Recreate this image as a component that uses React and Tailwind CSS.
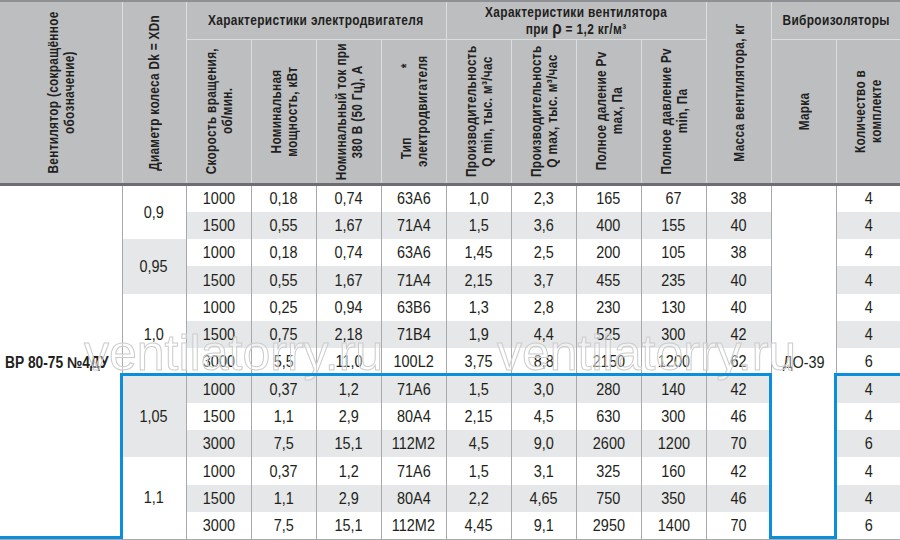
import React from "react";

const rows = [
  ["1000", "0,18", "0,74", "63А6", "1,0", "2,3", "165", "67", "38", "4"],
  ["1500", "0,55", "1,67", "71А4", "1,5", "3,6", "400", "155", "40", "4"],
  ["1000", "0,18", "0,74", "63А6", "1,45", "2,5", "200", "105", "38", "4"],
  ["1500", "0,55", "1,67", "71А4", "2,15", "3,7", "455", "235", "40", "4"],
  ["1000", "0,25", "0,94", "63В6", "1,3", "2,8", "230", "130", "40", "4"],
  ["1500", "0,75", "2,18", "71В4", "1,9", "4,4", "525", "300", "42", "4"],
  ["3000", "5,5", "11,0", "100L2", "3,75", "8,8", "2150", "1200", "62", "6"],
  ["1000", "0,37", "1,2", "71А6", "1,5", "3,0", "280", "140", "42", "4"],
  ["1500", "1,1", "2,9", "80А4", "2,15", "4,5", "630", "300", "46", "4"],
  ["3000", "7,5", "15,1", "112М2", "4,5", "9,0", "2600", "1200", "70", "6"],
  ["1000", "0,37", "1,2", "71А6", "1,5", "3,1", "325", "160", "42", "4"],
  ["1500", "1,1", "2,9", "80А4", "2,2", "4,65", "750", "350", "46", "4"],
  ["3000", "7,5", "15,1", "112М2", "4,45", "9,1", "2950", "1400", "70", "6"],
];

// diameter groups keyed by the first row index
const groups = {
  0: { d: "0,9", span: 2, gray: false },
  2: { d: "0,95", span: 2, gray: true },
  4: { d: "1,0", span: 3, gray: false },
  7: { d: "1,05", span: 3, gray: true },
  10: { d: "1,1", span: 3, gray: false },
};

const widths = [122, 64, 65, 65, 65, 65, 65, 65, 65, 65, 65, 65, 64];

// rotated header label, reads bottom to top; squeezed to look condensed
const Vert = ({ children, h = "h-[142px]" }) => (
  <div className={`flex ${h} items-center justify-center`}>
    <div className="[writing-mode:vertical-rl] rotate-180 scale-y-[0.84] whitespace-nowrap text-center leading-[16px]">
      {children}
    </div>
  </div>
);

// horizontal condensed text
const Narrow = ({ children, k = "scale-x-[0.85]" }) => (
  <div className="flex justify-center">
    <span className={`inline-block whitespace-nowrap ${k}`}>{children}</span>
  </div>
);

const th = "border border-[#dcdddf] border-t-0 p-0 align-middle font-bold";
const bottom = "border-b-[3px] border-b-[#6d6e71]";
const cellTxt = "inline-block scale-x-[0.85]";

export default function App() {
  return (
    <div className="relative h-[540px] w-[900px] overflow-hidden bg-white font-['Liberation_Sans',sans-serif] text-[#231f20]">
      <table className="w-[900px] table-fixed border-collapse">
        <colgroup>
          {widths.map((w, i) => (
            <col key={i} style={{ width: w }} />
          ))}
        </colgroup>
        <thead className="bg-[#bcbec0] text-[14px] tracking-[0.4px]">
          <tr className="border-t-2 border-t-[#8e9093]">
            <th rowSpan={2} className={`${th} ${bottom} border-l-0`}>
              <Vert h="h-[181px]">
                Вентилятор (сокращённое
                <br />
                обозначение)
              </Vert>
            </th>
            <th rowSpan={2} className={`${th} ${bottom}`}>
              <Vert h="h-[181px]">Диаметр колеса Dk = XDn</Vert>
            </th>
            <th colSpan={4} className={`${th} h-[38px]`}>
              <Narrow>Характеристики электродвигателя</Narrow>
            </th>
            <th colSpan={4} className={`${th} h-[38px] leading-[16px]`}>
              <Narrow>
                Характеристики вентилятора
                <br />
                при <span className="text-[18px]">ρ</span> = 1,2 кг/м³
              </Narrow>
            </th>
            <th rowSpan={2} className={`${th} ${bottom}`}>
              <Vert h="h-[181px]">Масса вентилятора, кг</Vert>
            </th>
            <th colSpan={2} className={`${th} h-[38px] border-r-0`}>
              <Narrow>Виброизоляторы</Narrow>
            </th>
          </tr>
          <tr>
            <th className={`${th} ${bottom}`}>
              <Vert>
                Скорость вращения,
                <br />
                об/мин.
              </Vert>
            </th>
            <th className={`${th} ${bottom}`}>
              <Vert>
                Номинальная
                <br />
                мощность, кВт
              </Vert>
            </th>
            <th className={`${th} ${bottom}`}>
              <Vert>
                Номинальный ток при
                <br />
                380 В (50 Гц), А
              </Vert>
            </th>
            <th className={`${th} ${bottom}`}>
              <Vert>
                Тип<span className="inline-block h-[82px]" />*
                <br />
                электродвигателя
              </Vert>
            </th>
            <th className={`${th} ${bottom}`}>
              <Vert>
                Производительность
                <br />
                Q min, тыс. м³/час
              </Vert>
            </th>
            <th className={`${th} ${bottom}`}>
              <Vert>
                Производительность
                <br />
                Q max, тыс. м³/час
              </Vert>
            </th>
            <th className={`${th} ${bottom}`}>
              <Vert>
                Полное даление Pv
                <br />
                max, Па
              </Vert>
            </th>
            <th className={`${th} ${bottom}`}>
              <Vert>
                Полное давление Pv
                <br />
                min, Па
              </Vert>
            </th>
            <th className={`${th} ${bottom}`}>
              <Vert>Марка</Vert>
            </th>
            <th className={`${th} ${bottom} border-r-0`}>
              <Vert>
                Количество в
                <br />
                комплекте
              </Vert>
            </th>
          </tr>
        </thead>
        <tbody className="text-[17px]">
          {rows.map((r, i) => {
            const bg = i % 2 === 1 ? "bg-[#e6e7e8]" : "bg-white";
            const g = groups[i];
            return (
              <tr key={i} className="h-[27.3px]">
                {i === 0 && (
                  <td rowSpan={13} className="border-r border-[#a7a9ac] bg-white pl-[5px] align-middle font-bold whitespace-nowrap">
                    <span className="inline-block origin-left scale-x-[0.86] text-[16px]">ВР 80-75 №4ДУ</span>
                  </td>
                )}
                {g && (
                  <td
                    rowSpan={g.span}
                    className={`border-x border-[#a7a9ac] text-center align-middle ${g.gray ? "bg-[#e6e7e8]" : "bg-white"}`}
                  >
                    <span className={cellTxt}>{g.d}</span>
                  </td>
                )}
                {r.slice(0, 9).map((v, j) => (
                  <td key={j} className={`border-x border-[#a7a9ac] p-0 text-center leading-none ${bg}`}>
                    <span className={cellTxt}>{v}</span>
                  </td>
                ))}
                {i === 0 && (
                  <td rowSpan={13} className="border-x border-[#a7a9ac] bg-white text-center align-middle">
                    <span className={cellTxt}>ДО-39</span>
                  </td>
                )}
                <td className={`border-l border-[#a7a9ac] p-0 text-center leading-none ${bg}`}>
                  <span className={cellTxt}>{r[9]}</span>
                </td>
              </tr>
            );
          })}
          <tr>
            <td colSpan={13} className="border-t border-[#a7a9ac]"></td>
          </tr>
        </tbody>
      </table>

      {/* watermark */}
      <span className="pointer-events-none absolute left-[84px] top-[328px] text-[50px] leading-none text-white/40 [-webkit-text-stroke:1px_#cbcccd]">
        ventilatorry.ru
      </span>
      <span className="pointer-events-none absolute left-[497px] top-[328px] text-[50px] leading-none text-white/40 [-webkit-text-stroke:1px_#cbcccd]">
        ventilatorry.ru
      </span>

      {/* blue highlight outline */}
      <svg className="pointer-events-none absolute left-0 top-0" width="900" height="540">
        <polyline
          points="0,537.5 121.5,537.5 121.5,374.5 770.5,374.5 770.5,537.5 835.5,537.5 835.5,374.5 900,374.5"
          fill="none"
          stroke="#0b8edb"
          strokeWidth="3"
        />
      </svg>
    </div>
  );
}
